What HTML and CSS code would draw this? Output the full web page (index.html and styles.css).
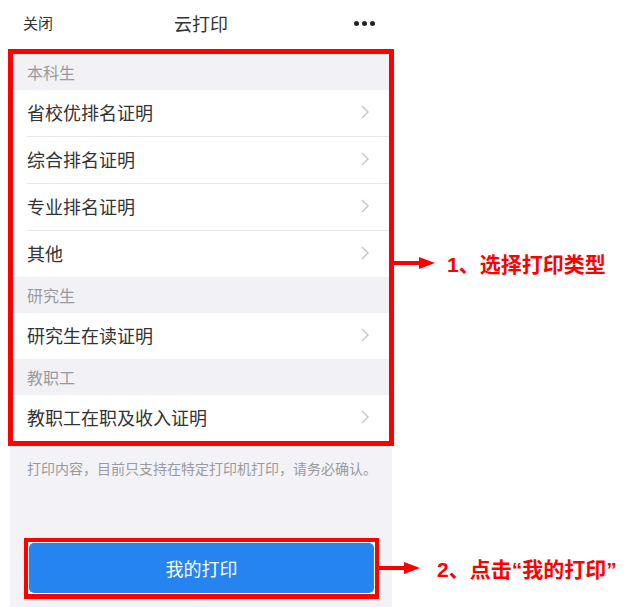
FILE: index.html
```html
<!DOCTYPE html>
<html lang="zh-CN">
<head>
    <meta charset="UTF-8">
    <meta name="viewport" content="width=device-width, initial-scale=1.0">
    <title>云打印</title>
    <link rel="stylesheet" href="styles.css">
</head>
<body>
    <div class="phone">
        <div class="nav">
            <span class="nav-close">关闭</span>
            <span class="nav-title">云打印</span>
            <span class="nav-more"><i></i><i></i><i></i></span>
        </div>

        <div class="mark-box list-box">
            <div class="section-title">本科生</div>
            <div class="row"><div class="row-body"><span>省校优排名证明</span><svg class="chevron" viewBox="0 0 8 14"><path d="M1 1l6 6-6 6"/></svg></div></div>
            <div class="row"><div class="row-body"><span>综合排名证明</span><svg class="chevron" viewBox="0 0 8 14"><path d="M1 1l6 6-6 6"/></svg></div></div>
            <div class="row"><div class="row-body"><span>专业排名证明</span><svg class="chevron" viewBox="0 0 8 14"><path d="M1 1l6 6-6 6"/></svg></div></div>
            <div class="row last"><div class="row-body"><span>其他</span><svg class="chevron" viewBox="0 0 8 14"><path d="M1 1l6 6-6 6"/></svg></div></div>

            <div class="section-title">研究生</div>
            <div class="row last"><div class="row-body"><span>研究生在读证明</span><svg class="chevron" viewBox="0 0 8 14"><path d="M1 1l6 6-6 6"/></svg></div></div>

            <div class="section-title">教职工</div>
            <div class="row last"><div class="row-body"><span>教职工在职及收入证明</span><svg class="chevron" viewBox="0 0 8 14"><path d="M1 1l6 6-6 6"/></svg></div></div>

            <div class="callout callout-list">
                <span class="arrow"></span>
                <span class="callout-text">1、选择打印类型</span>
            </div>
        </div>

        <div class="foot">
            <p class="note">打印内容，目前只支持在特定打印机打印，请务必确认。</p>
            <div class="btn-box">
                <button type="button" class="print-btn">我的打印</button>
                <div class="callout callout-btn">
                    <span class="arrow"></span>
                    <span class="callout-text">2、点击“我的打印”</span>
                </div>
            </div>
        </div>
    </div>
</body>
</html>
```

FILE: styles.css
```css
body {
    margin: 0;
    background-color: white;
    font-family: "Noto Sans CJK SC", "Noto Sans", sans-serif;
    color: #333;
}
.phone {
    width: 382px;
    margin-left: 10px;
}
.nav {
    height: 46px;
    margin-bottom: 3px;
    padding: 0 17px 0 13px;
    display: flex;
    align-items: center;
    justify-content: space-between;
    position: relative;
}
.nav-close {
    font-size: 15px;
    line-height: 20px;
}
.nav-title {
    position: absolute;
    left: 0;
    right: 0;
    text-align: center;
    font-size: 18px;
    line-height: 24px;
    pointer-events: none;
}
.nav-more {
    display: flex;
    gap: 3px;
}
.nav-more i {
    width: 5px;
    height: 5px;
    border-radius: 50%;
    background-color: #222;
}
.mark-box {
    border: 5px solid #ff0000;
    position: relative;
}
.list-box {
    margin: 0 -2px;
    background-color: white;
}
.section-title {
    height: 36px;
    padding-left: 14px;
    padding-bottom: 1px;
    box-sizing: border-box;
    display: flex;
    align-items: center;
    background-color: #f2f2f6;
    color: #9a9a9e;
    font-size: 16px;
}
.row {
    padding-left: 14px;
    background-color: white;
}
.row-body {
    height: 46px;
    padding: 0 20px 2px 0;
    box-sizing: border-box;
    display: flex;
    align-items: center;
    justify-content: space-between;
    border-bottom: 1px solid #e8e8ec;
    font-size: 18px;
    color: #333;
}
.row.last .row-body {
    border-bottom: none;
}
.row:not(.last) .row-body {
    height: 47px;
}
.chevron {
    width: 8px;
    height: 14px;
    fill: none;
    stroke: #c4c4c9;
    stroke-width: 1.4;
}
.foot {
    height: 161px;
    background-color: #f2f2f7;
    padding-top: 12px;
    box-sizing: border-box;
}
.note {
    margin: 0;
    padding-left: 17px;
    font-size: 14px;
    line-height: 20px;
    color: #9a9a9e;
}
.btn-box {
    width: 355px;
    box-sizing: border-box;
    margin: 60px 0 0 14px;
    border: 4px solid #ff0000;
    border-bottom-width: 5px;
    padding: 1px;
    background-color: white;
    position: relative;
}
.print-btn {
    display: block;
    width: 100%;
    height: 50px;
    border: none;
    border-radius: 5px;
    background-color: #2584f0;
    color: white;
    font-family: "Noto Sans CJK SC", sans-serif;
    font-size: 18px;
    cursor: pointer;
}
.callout {
    position: absolute;
    display: flex;
    align-items: center;
    white-space: nowrap;
}
.callout-list {
    left: calc(100% + 5px);
    top: 209px;
    transform: translateY(-50%);
}
.callout-btn {
    left: calc(100% + 4px);
    top: 50%;
    transform: translateY(-50%);
}
.arrow {
    display: flex;
    align-items: center;
}
.arrow::before {
    content: "";
    width: 26px;
    height: 4px;
    background-color: #ff0000;
}
.arrow::after {
    content: "";
    border-left: 16px solid #ff0000;
    border-top: 6px solid transparent;
    border-bottom: 6px solid transparent;
    margin-left: -1px;
}
.callout-text {
    margin-left: 12px;
    font-family: "Liberation Sans", "Noto Sans CJK SC", sans-serif;
    font-weight: bold;
    font-size: 21px;
    color: #ff0000;
}
.callout-btn .callout-text {
    margin-left: 17px;
}
```
